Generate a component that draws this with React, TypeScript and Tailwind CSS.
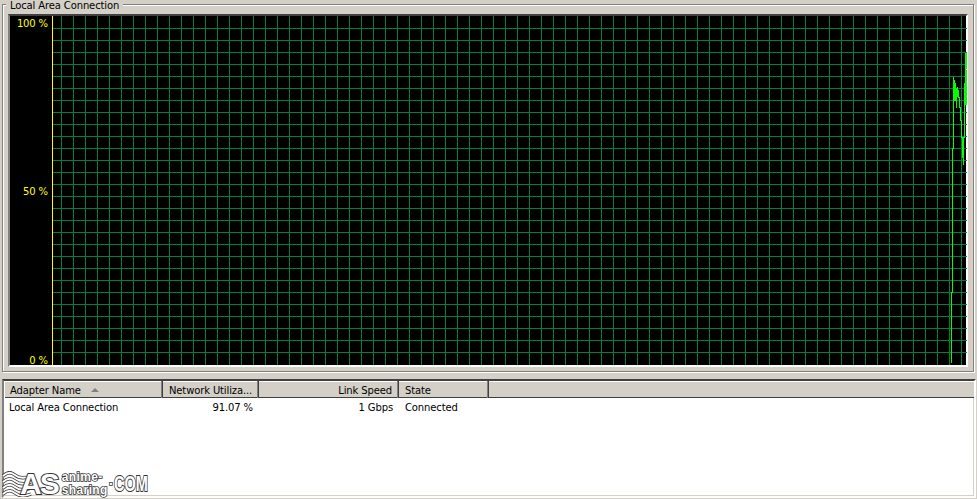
// grid and trace use page coordinates, the viewBox starts where the plot starts
const verticals = Array.from({ length: 76 }, (_, i) => 61 + 12 * i);
const horizontals = Array.from({ length: 28 }, (_, i) => 28 + 12 * i);

const traceThin =
  "951.5,363 951.5,292 952.5,292 952.5,148 953.5,148 953.5,77 954.5,83 954.5,100 955.5,100 955.5,83 956.5,108 956.5,90 957.5,87 957.5,97 958.5,90 958.5,97 959.5,97 959.5,107 960.5,107 960.5,120 961.5,120 961.5,137 962.5,137 962.5,157 963.5,157 963.5,165 963.5,137 964.5,137 964.5,83";
const traceThick = "965.5,105 965.5,70 966,53";

const labels = [
  { text: "100 %", top: "top-[1px]" },
  { text: "50 %", top: "top-[169px]" },
  { text: "0 %", top: "top-[338px]" },
];

const columns = [
  { name: "Adapter Name", width: "w-[159px]", extra: "pl-[6px] pr-[6px]", sort: true },
  { name: "Network Utiliza...", width: "w-[96px]", extra: "px-[6px]" },
  { name: "Link Speed", width: "w-[140px]", extra: "px-[6px] justify-end" },
  { name: "State", width: "w-[90px]", extra: "px-[6px]" },
];

const cells = [
  { text: "Local Area Connection", width: "w-[159px]", extra: "pl-[5px] text-left" },
  { text: "91.07 %", width: "w-[96px]", extra: "pr-[6px] text-right" },
  { text: "1 Gbps", width: "w-[140px]", extra: "pr-[6px] text-right" },
  { text: "Connected", width: "w-[90px]", extra: "pl-[6px] text-left" },
];

const waves = [5, 11, 17, 23];

const Chart = () => {
  return (
    <div className="relative h-[353px] border-2 border-t-[#404040] border-l-[#808080] border-r-white border-b-white bg-black">
      <svg width={957} height={349} viewBox="10 16 957 349" className="block" shapeRendering="crispEdges">
        {horizontals.map((y) => (
          <line key={y} x1={52} x2={967} y1={y + 0.5} y2={y + 0.5} stroke="#008040" />
        ))}
        {verticals.map((x) => (
          <line key={x} x1={x + 0.5} x2={x + 0.5} y1={16} y2={365} stroke="#008040" />
        ))}
        <line x1={52.5} x2={52.5} y1={16} y2={365} stroke="#ffff00" />
        <polyline points={traceThin} fill="none" stroke="#00ff00" />
        <polyline points={traceThick} fill="none" stroke="#00ff00" strokeWidth={2} />
      </svg>
      {labels.map((l) => (
        <span key={l.text} className={`absolute left-0 w-[38px] text-right text-[#ffff00] ${l.top}`}>
          {l.text}
        </span>
      ))}
    </div>
  );
};

const Watermark = () => {
  return (
    <div className="absolute left-[2px] top-[471px] flex h-[26px] items-center font-['Liberation_Sans',sans-serif] font-bold tracking-normal text-white">
      <svg width={30} height={26} viewBox="0 0 30 26" className="shrink-0">
        {waves.map((y) => (
          <path key={y} d={`M1 ${y} Q7 ${y - 6} 13 ${y - 1} T29 ${y}`} fill="none" stroke="#3a3a3a" strokeWidth={3.5} />
        ))}
        {waves.map((y) => (
          <path key={y} d={`M1 ${y} Q7 ${y - 6} 13 ${y - 1} T29 ${y}`} fill="none" stroke="#ffffff" strokeWidth={1.8} />
        ))}
      </svg>
      <span className="-ml-[12px] shrink-0 text-[30px] leading-[26px] tracking-[-2px] [-webkit-text-stroke:2px_#333333] [paint-order:stroke_fill]">
        AS
      </span>
      <div className="ml-[4px] flex w-[47px] flex-col text-[12px] leading-[13px] tracking-[0.4px] [-webkit-text-stroke:1.5px_#333333] [paint-order:stroke_fill]">
        <span>anime-</span>
        <span>sharing</span>
      </div>
      <span className="w-[5px] text-[15px] leading-[26px] [-webkit-text-stroke:1.5px_#333333] [paint-order:stroke_fill]">·</span>
      <span className="w-[36px] origin-left scale-x-[0.66] whitespace-nowrap text-[22px] leading-[26px] [-webkit-text-stroke:2px_#333333] [paint-order:stroke_fill]">
        COM
      </span>
    </div>
  );
};

const App = () => {
  return (
    <div className="relative w-[977px] h-[499px] overflow-hidden bg-[#d4d0c8] pt-[4px] font-['DejaVu_Sans',sans-serif] text-[10px] leading-[13px] tracking-[-0.13px] text-black">
      <div className="relative ml-[2px] w-[972px] h-[368px] border border-[#808080] shadow-[1px_1px_0_#ffffff,inset_1px_1px_0_#ffffff] pt-[9px] pl-[5px] pr-[5px]">
        <span className="absolute left-[3px] -top-[6px] bg-[#d4d0c8] px-[4px]">Local Area Connection</span>
        <Chart />
      </div>
      <div className="mt-[7px] ml-[2px] w-[974px] h-[119px] border-2 border-t-[#404040] border-l-[#808080] border-r-white border-b-white bg-white shadow-[inset_-1px_-1px_0_#d4d0c8]">
        <div className="flex h-[17px] bg-[#d4d0c8] shadow-[inset_1px_1px_0_#ffffff,inset_0_-1px_0_#404040]">
          {columns.map((c) => (
            <div
              key={c.name}
              className={`flex items-center gap-[10px] whitespace-nowrap border-r border-r-[#404040] pt-[1px] shadow-[inset_-1px_0_0_#808080] ${c.width} ${c.extra}`}
            >
              <span>{c.name}</span>
              {c.sort && <span className="border-x-[4px] border-b-[4px] border-x-transparent border-b-[#808080]" />}
            </div>
          ))}
        </div>
        <div className="flex h-[18px] items-center">
          {cells.map((c) => (
            <div key={c.text} className={`${c.width} ${c.extra}`}>
              {c.text}
            </div>
          ))}
        </div>
      </div>
      <Watermark />
    </div>
  );
};

export default App;
